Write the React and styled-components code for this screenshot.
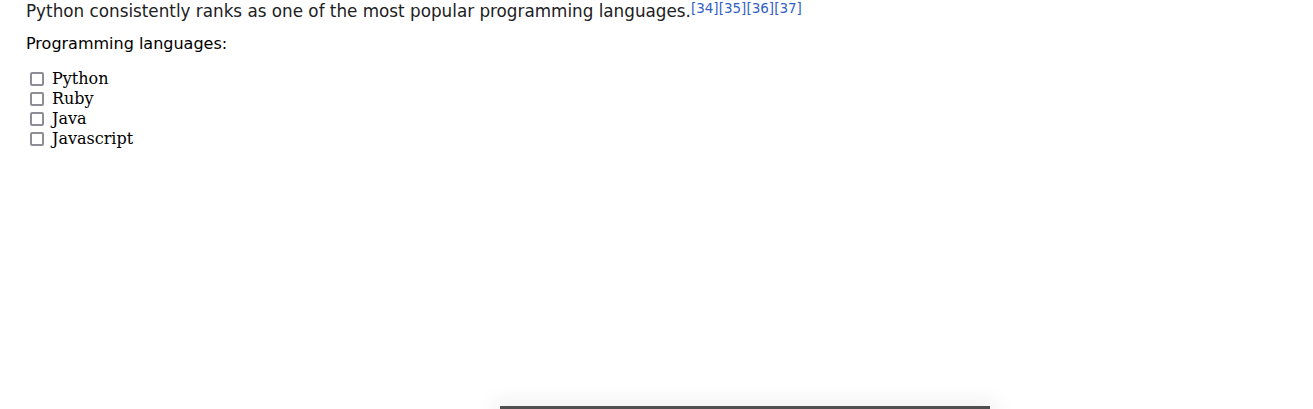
import React from "react";
import styled, { createGlobalStyle } from "styled-components";

const Global = createGlobalStyle`
  html, body { margin: 0; padding: 0; background: #fff; }
  body { overflow: hidden; }
`;

const Page = styled.div`
  padding: 0 26px;
  font-family: "DejaVu Sans", sans-serif;
  color: #202122;
`;

const Lead = styled.p`
  margin: 0;
  font-size: 16.8px;
  line-height: 23px;
`;

const Ref = styled.sup`
  font-size: 13.5px;
  line-height: 0;
  vertical-align: 4px;
  a { color: #3160c8; text-decoration: none; }
`;

const Heading = styled.p`
  margin: 10px 0 0;
  font-size: 16px;
  line-height: 22px;
  color: #000;
`;

const List = styled.div`
  display: flex;
  flex-direction: column;
  margin-top: 14px;
  font-family: "DejaVu Serif", serif;
  font-size: 16px;
  line-height: 20px;
  color: #000;
`;

const Item = styled.label`
  display: flex;
  align-items: center;
  gap: 8px;
  height: 20px;
`;

const Box = styled.input`
  appearance: none;
  box-sizing: border-box;
  margin: 0 0 0 4px;
  width: 14px;
  height: 14px;
  border: 2px solid #8e8e97;
  border-radius: 2px;
  background: #fff;
  flex: none;
  &:checked { background: #3366cc; border-color: #3366cc; }
`;

const Dock = styled.div`
  position: fixed;
  left: 500px;
  top: 406px;
  width: 490px;
  height: 40px;
  background: #4f4f4f;
  box-shadow: 0 0 22px 6px rgba(0, 0, 0, 0.06);
`;

const refs = ["34", "35", "36", "37"];
const langs = ["Python", "Ruby", "Java", "Javascript"];

export default function App() {
  return (
    <>
      <Global />
      <Page>
        <Lead>
          Python consistently ranks as one of the most popular programming languages.
          <Ref>
            {refs.map((r) => (
              <a key={r} href="#">[{r}]</a>
            ))}
          </Ref>
        </Lead>
        <Heading>Programming languages:</Heading>
        <List>
          {langs.map((l) => (
            <Item key={l}>
              <Box type="checkbox" />
              {l}
            </Item>
          ))}
        </List>
      </Page>
      <Dock />
    </>
  );
}
